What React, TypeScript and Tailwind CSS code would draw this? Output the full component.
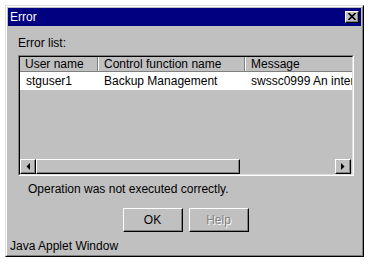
import React from 'react';

const raised =
  'border border-t-white border-l-white border-r-black border-b-black';

function ArrowButton({ dir }: { dir: 'left' | 'right' }) {
  return (
    <div className={`w-[16px] h-full bg-[#c0c0c0] ${raised}`}>
      <div className="w-full h-full border-r border-b border-r-[#808080] border-b-[#808080] flex items-center justify-center">
        <svg width="4" height="7" viewBox="0 0 4 7">
          {dir === 'left' ? (
            <polygon points="4,0 4,7 0.5,3.5" fill="#000" />
          ) : (
            <polygon points="0,0 0,7 3.5,3.5" fill="#000" />
          )}
        </svg>
      </div>
    </div>
  );
}

export default function App() {
  return (
    <div
      className="w-[371px] h-[265px] bg-white pt-[5px] pl-[5px] text-[12px] leading-[14px] text-black"
      style={{ fontFamily: '"Liberation Sans", Arial, sans-serif' }}
    >
      {/* window frame */}
      <div className="w-[359px] h-[252px] bg-[#c0c0c0] border border-t-[#dfdfdf] border-l-[#dfdfdf] border-r-black border-b-black">
        <div className="w-full h-full border border-t-white border-l-white border-r-[#808080] border-b-[#808080] p-[1px] flex flex-col">
          {/* title bar */}
          <div className="h-[18px] bg-[#000080] flex items-center justify-between pl-[2px] pr-[2px]">
            <span className="text-white">Error</span>
            <div className={`w-[14px] h-[12px] bg-[#c0c0c0] ${raised}`}>
              <div className="w-full h-full border-r border-b border-r-[#808080] border-b-[#808080] flex items-center justify-center">
                <svg width="8" height="7" viewBox="0 0 8 7">
                  <path d="M0.5 0 L7.5 7 M7.5 0 L0.5 7" stroke="#000" strokeWidth="1.6" />
                </svg>
              </div>
            </div>
          </div>

          <div className="px-[10px] flex flex-col">
            <div className="mt-[10px]">Error list:</div>

            {/* table */}
            <div className="mt-[5px] w-[336px] h-[121px] border border-t-[#808080] border-l-[#808080] border-r-white border-b-white">
              <div className="w-full h-full border border-t-black border-l-black border-r-[#dfdfdf] border-b-[#dfdfdf] flex flex-col overflow-hidden">
                <div className="flex h-[15px] shrink-0 border-b border-b-[#808080]">
                  <div className="w-[78px] shrink-0 border-r border-r-[#808080] pl-[5px] flex items-center">
                    User name
                  </div>
                  <div className="w-[147px] shrink-0 border-l border-l-white border-r border-r-[#808080] pl-[5px] flex items-center">
                    Control function name
                  </div>
                  <div className="flex-1 border-l border-l-white pl-[5px] flex items-center whitespace-nowrap overflow-hidden">
                    Message
                  </div>
                </div>
                <div className="flex h-[18px] shrink-0 bg-white">
                  <div className="w-[78px] shrink-0 pl-[6px] flex items-center">stguser1</div>
                  <div className="w-[147px] shrink-0 pl-[6px] flex items-center">Backup Management</div>
                  <div className="flex-1 pl-[6px] flex items-center whitespace-nowrap overflow-hidden">
                    swssc0999 An internal error occurred.
                  </div>
                </div>
                <div className="flex-1" />
                {/* horizontal scrollbar */}
                <div className="h-[15px] shrink-0 flex pr-[1px]">
                  <ArrowButton dir="left" />
                  <div className="flex-1 flex">
                    <div className={`w-[204px] h-full bg-[#c0c0c0] ${raised}`}>
                      <div className="w-full h-full border-r border-b border-r-[#808080] border-b-[#808080]" />
                    </div>
                    <div className="flex-1" />
                  </div>
                  <ArrowButton dir="right" />
                </div>
              </div>
            </div>

            <div className="mt-[6px] pl-[10px]">Operation was not executed correctly.</div>

            {/* buttons */}
            <div className="mt-[12px] flex justify-center gap-[6px] pl-[3px]">
              <button className={`w-[60px] h-[24px] bg-[#c0c0c0] ${raised}`}>
                <div className="w-full h-full border-r border-b border-r-[#808080] border-b-[#808080] flex items-center justify-center">
                  OK
                </div>
              </button>
              <button className={`w-[60px] h-[24px] bg-[#c0c0c0] ${raised}`} disabled>
                <div
                  className="w-full h-full border-r border-b border-r-[#808080] border-b-[#808080] flex items-center justify-center text-[#808080]"
                  style={{ textShadow: '1px 1px 0 #ffffff' }}
                >
                  Help
                </div>
              </button>
            </div>
          </div>

          <div className="mt-[7px] pl-[2px]">Java Applet Window</div>
        </div>
      </div>
    </div>
  );
}
